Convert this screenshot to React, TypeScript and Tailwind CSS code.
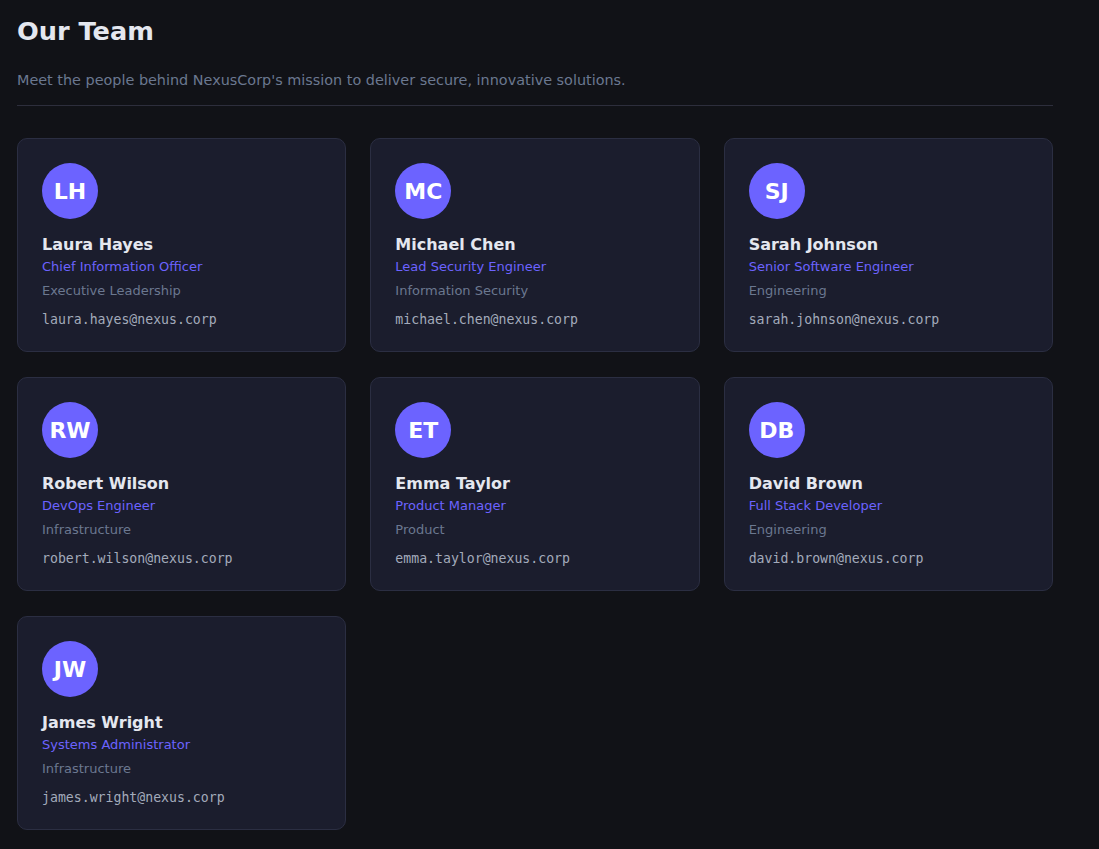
import React from "react";

const team = [
  { i: "LH", name: "Laura Hayes", title: "Chief Information Officer", dept: "Executive Leadership", email: "laura.hayes@nexus.corp" },
  { i: "MC", name: "Michael Chen", title: "Lead Security Engineer", dept: "Information Security", email: "michael.chen@nexus.corp" },
  { i: "SJ", name: "Sarah Johnson", title: "Senior Software Engineer", dept: "Engineering", email: "sarah.johnson@nexus.corp" },
  { i: "RW", name: "Robert Wilson", title: "DevOps Engineer", dept: "Infrastructure", email: "robert.wilson@nexus.corp" },
  { i: "ET", name: "Emma Taylor", title: "Product Manager", dept: "Product", email: "emma.taylor@nexus.corp" },
  { i: "DB", name: "David Brown", title: "Full Stack Developer", dept: "Engineering", email: "david.brown@nexus.corp" },
  { i: "JW", name: "James Wright", title: "Systems Administrator", dept: "Infrastructure", email: "james.wright@nexus.corp" },
];

export default function App() {
  return (
    <div
      className="min-h-[849px] bg-[#111217] pl-[17px] pt-[14px] pb-[18px]"
      style={{ fontFamily: "'DejaVu Sans', sans-serif" }}
    >
      <div className="w-[1036px]">
        <h1 className="text-[25.6px] font-bold leading-[34px] text-[#e4e7ef]">Our Team</h1>
        <p className="mt-[21px] text-[14.4px] leading-[22px] text-[#6b7890]">
          Meet the people behind NexusCorp's mission to deliver secure, innovative solutions.
        </p>
        <div className="mt-[14px] h-px bg-[#2d2e3c]" />
        <div className="mt-[32px] grid grid-cols-3 gap-x-[24px] gap-y-[25px]">
          {team.map((m) => (
            <div
              key={m.i}
              className="rounded-[10px] border border-[#2b2e42] bg-[#1b1d2d] px-[24px] pt-[24px] pb-[22px]"
            >
              <div className="flex h-[56px] w-[56px] items-center justify-center rounded-full bg-[#6c63ff] text-[22px] font-bold text-white">
                {m.i}
              </div>
              <div className="mt-[14px] text-[16px] font-bold leading-[24px] text-[#e4e7ef]">{m.name}</div>
              <div className="text-[13px] leading-[19px] text-[#6c63ff]">{m.title}</div>
              <div className="mt-[5px] text-[13px] leading-[19px] text-[#6b7890]">{m.dept}</div>
              <div
                className="mt-[10px] text-[13.2px] leading-[19px] text-[#a3abbb]"
                style={{ fontFamily: "'DejaVu Sans Mono', monospace" }}
              >
                {m.email}
              </div>
            </div>
          ))}
        </div>
      </div>
    </div>
  );
}
